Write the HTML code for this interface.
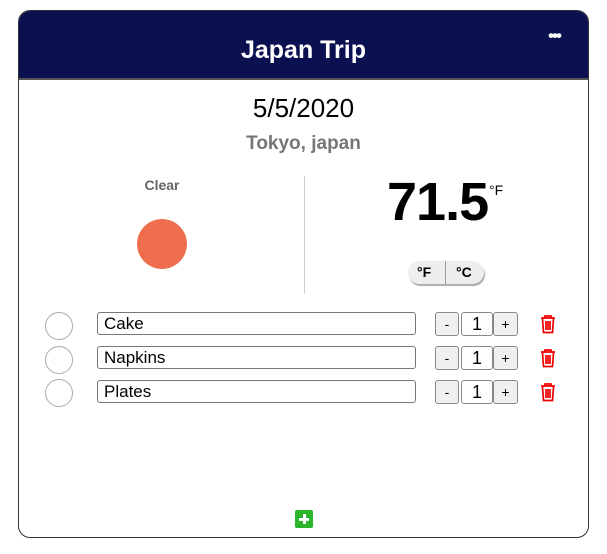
<!DOCTYPE html>
<html><head><style>
body{margin:0;width:607px;height:554px;background:#fff;font-family:"Liberation Sans",sans-serif;position:relative}
.card{position:absolute;left:18px;top:10px;width:569px;height:526px;border:1px solid #333;border-radius:12px;overflow:hidden}
.hdr{position:absolute;left:0;top:0;width:569px;height:67px;background:#0b1050;border-bottom:2px solid #555}
.abs{position:absolute}
.t{color:#fff;font-weight:bold;font-size:25px;left:0;width:569px;text-align:center;top:25px}
.row .cb{position:absolute;left:26px;width:26px;height:26px;border:1px solid #aaa;border-radius:50%}
.inp{position:absolute;left:78px;height:21px;border:1px solid #777;border-radius:3px;font-size:17px;line-height:22px;padding-left:6px;box-sizing:content-box;width:311px}
.b{position:absolute;height:22px;border:1px solid #888;border-radius:3px;background:#f0f0f0;font-size:14px;text-align:center;line-height:22px}
.n{position:absolute;height:22px;border:1px solid #888;border-radius:3px;background:#fff;font-size:18px;text-align:center;line-height:22px}
</style></head><body>
<div class="card">
<div class="hdr"></div>
<div class="abs t">Japan Trip</div>
<div class="abs" style="right:28px;top:16px;color:#fff;font-size:17px;font-weight:bold;letter-spacing:-2px;line-height:17px">•••</div>
<div class="abs" style="left:0;width:569px;text-align:center;top:82px;font-size:26px;color:#000">5/5/2020</div>
<div class="abs" style="left:0;width:569px;text-align:center;top:122px;font-size:19px;font-weight:bold;color:#777">Tokyo, japan</div>
<div class="abs" style="left:93px;width:100px;text-align:center;top:166px;font-size:14px;font-weight:bold;color:#666">Clear</div>
<div class="abs" style="left:118px;top:208px;width:50px;height:50px;border-radius:50%;background:#ee6e4e"></div>
<div class="abs" style="left:285px;top:165px;width:1px;height:118px;background:#ccc"></div>
<div class="abs" style="left:368px;top:160px;font-size:54px;color:#000;letter-spacing:-1px;font-weight:600">71.5</div>
<div class="abs" style="left:470px;top:171px;font-size:14px">°F</div>
<div class="abs" style="left:389px;top:250px;width:76px;height:23px;border-radius:12px;background:#eee;box-shadow:1px 2px 1px #aaa;font-size:14px;font-weight:bold;line-height:23px">
<span style="position:absolute;left:9px">°F</span><span style="position:absolute;left:37px;top:0;width:1px;height:23px;background:#999"></span><span style="position:absolute;left:48px">°C</span></div>

<div class="row">
<div class="cb" style="top:301px"></div><div class="inp" style="top:301px">Cake</div>
<div class="b" style="left:416px;top:301px;width:22px">-</div><div class="n" style="left:442px;top:301px;width:30px">1</div><div class="b" style="left:474px;top:301px;width:23px">+</div>
<div class="abs" style="left:521px;top:304px"><svg width="16" height="19" viewBox="0 0 16 19"><path d="M1 3h14M5 3V1h6v2M2.5 3.5l1 14h9l1-14M6 6v9M8 6v9M10 6v9" fill="none" stroke="#e00" stroke-width="1.7"/></svg></div>
</div>
<div class="row">
<div class="cb" style="top:335px"></div><div class="inp" style="top:335px">Napkins</div>
<div class="b" style="left:416px;top:335px;width:22px">-</div><div class="n" style="left:442px;top:335px;width:30px">1</div><div class="b" style="left:474px;top:335px;width:23px">+</div>
<div class="abs" style="left:521px;top:338px"><svg width="16" height="19" viewBox="0 0 16 19"><path d="M1 3h14M5 3V1h6v2M2.5 3.5l1 14h9l1-14M6 6v9M8 6v9M10 6v9" fill="none" stroke="#e00" stroke-width="1.7"/></svg></div>
</div>
<div class="row">
<div class="cb" style="top:368px"></div><div class="inp" style="top:369px">Plates</div>
<div class="b" style="left:416px;top:369px;width:22px">-</div><div class="n" style="left:442px;top:369px;width:30px">1</div><div class="b" style="left:474px;top:369px;width:23px">+</div>
<div class="abs" style="left:521px;top:372px"><svg width="16" height="19" viewBox="0 0 16 19"><path d="M1 3h14M5 3V1h6v2M2.5 3.5l1 14h9l1-14M6 6v9M8 6v9M10 6v9" fill="none" stroke="#e00" stroke-width="1.7"/></svg></div>
</div>
<div class="abs" style="left:276px;top:499px;width:18px;height:18px;background:#2bb52b;border-radius:2px">
<div class="abs" style="left:4px;top:7.5px;width:10px;height:3px;background:#fff"></div>
<div class="abs" style="left:7.5px;top:4px;width:3px;height:10px;background:#fff"></div></div>
</div>
</body></html>
